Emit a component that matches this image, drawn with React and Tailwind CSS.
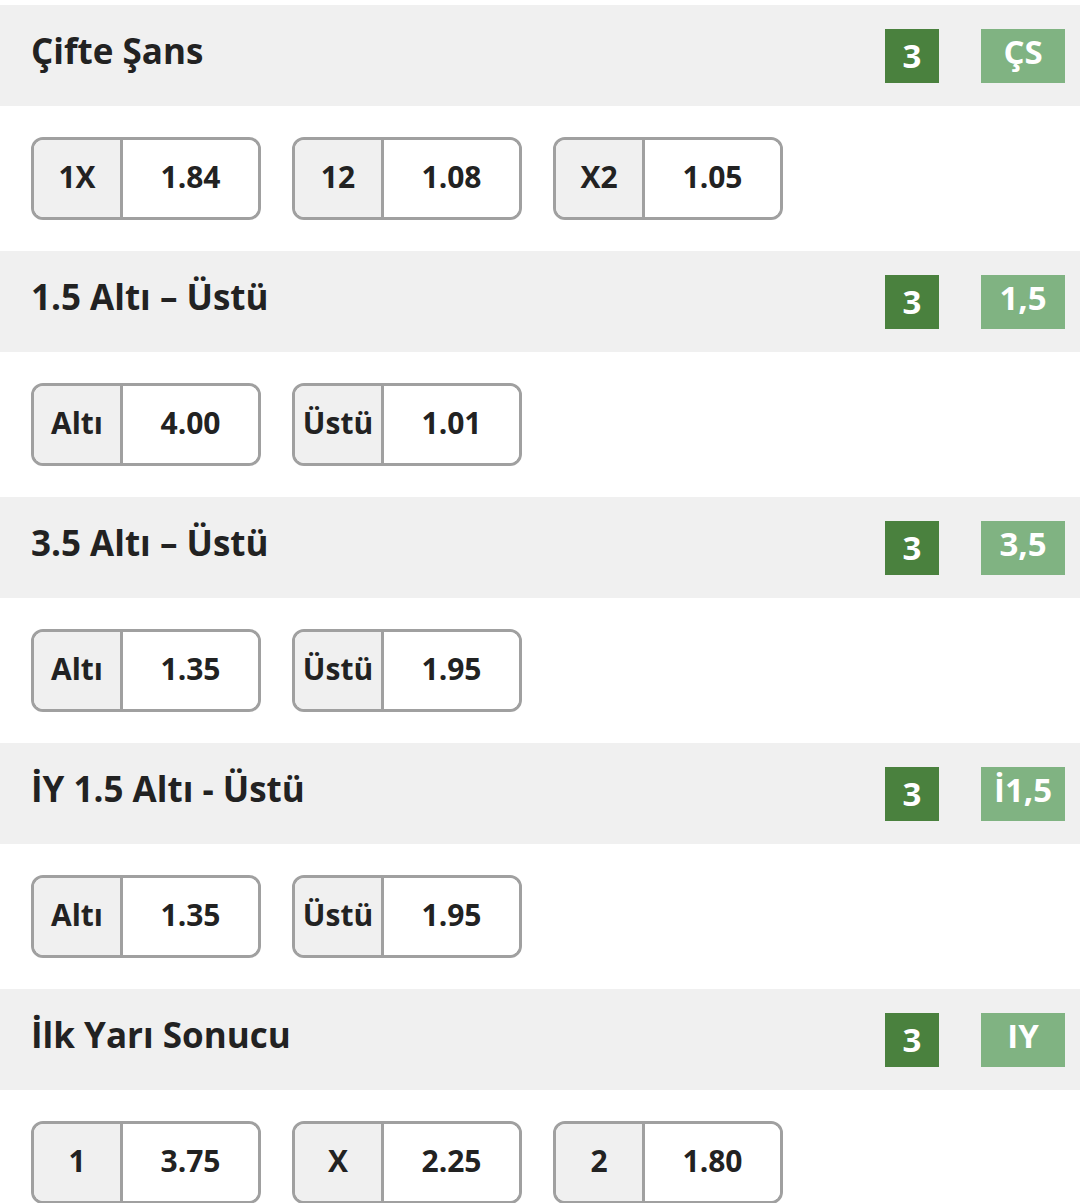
const markets = [
  {
    title: 'Çifte Şans',
    tag: 'ÇS',
    odds: [
      ['1X', '1.84'],
      ['12', '1.08'],
      ['X2', '1.05'],
    ],
  },
  {
    title: '1.5 Altı – Üstü',
    tag: '1,5',
    odds: [
      ['Altı', '4.00'],
      ['Üstü', '1.01'],
    ],
  },
  {
    title: '3.5 Altı – Üstü',
    tag: '3,5',
    odds: [
      ['Altı', '1.35'],
      ['Üstü', '1.95'],
    ],
  },
  {
    title: 'İY 1.5 Altı - Üstü',
    tag: 'İ1,5',
    odds: [
      ['Altı', '1.35'],
      ['Üstü', '1.95'],
    ],
  },
  {
    title: 'İlk Yarı Sonucu',
    tag: 'IY',
    odds: [
      ['1', '3.75'],
      ['X', '2.25'],
      ['2', '1.80'],
    ],
  },
];

function OddButton({ label, value }) {
  return (
    <div className="flex h-[83px] w-[230px] overflow-hidden rounded-[12px] border-[3px] border-[#a0a0a0]">
      <div className="flex w-[89px] items-center justify-center border-r-[3px] border-[#a0a0a0] bg-[#f0f0f0] pb-[4px]">
        {label}
      </div>
      <div className="flex flex-1 items-center justify-center bg-white pb-[4px]">{value}</div>
    </div>
  );
}

function Market({ market }) {
  return (
    <div>
      {/* Header */}
      <div className="flex h-[101px] items-center justify-between bg-[#f0f0f0] pl-[31px] pr-[15px]">
        <h2 className="pb-[8px] text-[35px] font-bold text-[#222]">{market.title}</h2>
        <div className="flex items-center gap-[42px]">
          <span className="flex h-[54px] w-[54px] items-center justify-center bg-[#4a813e] text-[33px] font-bold text-white">
            3
          </span>
          <span className="flex h-[54px] w-[84px] items-center justify-center bg-[#80b382] pb-[8px] text-[33px] font-bold leading-none text-white">
            {market.tag}
          </span>
        </div>
      </div>

      {/* Odds */}
      <div className="flex gap-[31px] bg-white p-[31px] text-[30px] font-bold text-[#222]">
        {market.odds.map(([label, value]) => (
          <OddButton key={label} label={label} value={value} />
        ))}
      </div>
    </div>
  );
}

export default function App() {
  return (
    <div
      className="min-h-screen bg-white pt-[5px]"
      style={{ fontFamily: '"Open Sans", "Noto Sans", sans-serif' }}
    >
      {markets.map((m) => (
        <Market key={m.title} market={m} />
      ))}
    </div>
  );
}
